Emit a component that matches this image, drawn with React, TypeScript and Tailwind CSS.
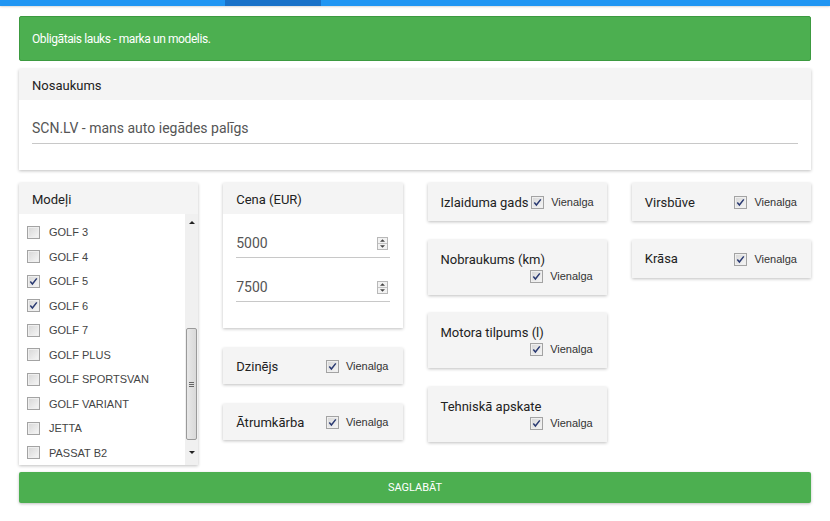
import React from "react";

const roboto = { fontFamily: "Roboto, 'Liberation Sans', sans-serif" };

function Cb({ checked }: { checked?: boolean }) {
  return (
    <span className="relative inline-flex h-[13px] w-[13px] shrink-0 items-center justify-center border border-[#a3a3a3] bg-linear-to-br from-[#d6d6d6] to-[#f7f7f7]">
      <span className="absolute inset-0 border border-[#efefef]" />
      {checked && (
        <svg viewBox="0 0 11 11" className="relative h-[11px] w-[11px]">
          <polyline points="2.3,5.6 4.4,8 8.8,2.4" fill="none" stroke="#2a3a72" strokeWidth="1.5" />
        </svg>
      )}
    </span>
  );
}

function Any() {
  return (
    <div className="flex items-center gap-[7px] whitespace-nowrap" style={{ fontFamily: "'Liberation Sans', Arial, sans-serif" }}>
      <Cb checked />
      <span className="text-[11px] text-[#333]">Vienalga</span>
    </div>
  );
}

function InlineCard({ label, h = "h-[38px]" }: { label: string; h?: string }) {
  return (
    <div className={`flex ${h} items-center justify-between whitespace-nowrap bg-[#f4f4f4] pl-[13px] pr-[14px] pt-[1px] shadow-[0_1px_3px_rgba(0,0,0,0.25)]`}>
      <span className="text-[13px] text-[#222]">{label}</span>
      <Any />
    </div>
  );
}

function StackCard({ label }: { label: string }) {
  return (
    <div className="flex h-[55px] flex-col bg-[#f4f4f4] pl-[13px] pr-[14px] pt-[12px] shadow-[0_1px_3px_rgba(0,0,0,0.25)]">
      <span className="text-[13px] leading-[16px] text-[#222]">{label}</span>
      <div className="flex h-[17px] justify-end">
        <Any />
      </div>
    </div>
  );
}

function Spinner() {
  return (
    <span className="flex h-[13px] w-[11px] flex-col border border-[#b8b8b8] bg-[#f2f2f2]">
      <span className="flex flex-1 items-center justify-center border-b border-[#c4c4c4]">
        <svg viewBox="0 0 6 3" className="h-[3px] w-[5px]"><polygon points="0,3 3,0 6,3" fill="#444" /></svg>
      </span>
      <span className="flex flex-1 items-center justify-center">
        <svg viewBox="0 0 6 3" className="h-[3px] w-[5px]"><polygon points="0,0 6,0 3,3" fill="#444" /></svg>
      </span>
    </span>
  );
}

const models = [
  { n: "GOLF 3" },
  { n: "GOLF 4" },
  { n: "GOLF 5", c: true },
  { n: "GOLF 6", c: true },
  { n: "GOLF 7" },
  { n: "GOLF PLUS" },
  { n: "GOLF SPORTSVAN" },
  { n: "GOLF VARIANT" },
  { n: "JETTA" },
  { n: "PASSAT B2" },
];

export default function App() {
  return (
    <div className="min-h-[521px] w-[830px] bg-white" style={roboto}>
      <div className="flex h-[6px] bg-[#2196f3] shadow-[0_1px_2px_rgba(0,0,0,0.15)]">
        <div className="ml-[225px] w-[96px] bg-[#1a72c9]" />
      </div>
      <div className="px-[19px] pt-[10px]">
        <div className="flex h-[45px] items-center rounded-[2px] border border-[#3c9a40] bg-[#4caf50] pl-[12px] text-[12px] tracking-[-0.4px] text-white">
          Obligātais lauks - marka un modelis.
        </div>

        <div className="mt-[8px] bg-white shadow-[0_1px_3px_rgba(0,0,0,0.25)]">
          <div className="flex h-[31px] items-center bg-[#f4f4f4] px-[13px] pt-[2px] text-[13px] text-[#222]">Nosaukums</div>
          <div className="px-[13px] pb-[26px] pt-[13px]">
            <div className="flex h-[31px] items-center border-b border-[#c8c8c8] pt-[1px] text-[14px] text-[#555]">
              SCN.LV - mans auto iegādes palīgs
            </div>
          </div>
        </div>

        <div className="mt-[13px] grid grid-cols-4 gap-x-[25px]">
          {/* Modeli */}
          <div className="flex h-[282px] flex-col bg-white shadow-[0_1px_3px_rgba(0,0,0,0.25)]">
            <div className="flex h-[31px] shrink-0 items-center bg-[#f4f4f4] px-[13px] pt-[2px] text-[13px] text-[#222]">Modeļi</div>
            <div className="flex min-h-0 flex-1">
              <div className="flex-1 pt-[6px]" style={{ fontFamily: "'Liberation Sans', Arial, sans-serif" }}>
                {models.map((m) => (
                  <div key={m.n} className="flex h-[24.5px] items-center pl-[8px]">
                    <Cb checked={m.c} />
                    <span className="ml-[9px] text-[11px] text-[#444]">{m.n}</span>
                  </div>
                ))}
              </div>
              <div className="flex w-[13px] flex-col items-center bg-[#f0f0f0]">
                <div className="flex h-[16px] items-center justify-center">
                  <svg viewBox="0 0 6 3" className="h-[3px] w-[6px]"><polygon points="0,3 3,0 6,3" fill="#222" /></svg>
                </div>
                <div className="h-[98px]" />
                <div className="flex h-[112px] w-[11px] items-center justify-center rounded-[2px] border border-[#9a9a9a] bg-linear-to-r from-[#e8e8e8] to-[#d9d9d9]">
                  <div className="flex flex-col gap-[1px]">
                    <span className="block h-[1px] w-[5px] bg-[#666]" />
                    <span className="block h-[1px] w-[5px] bg-[#666]" />
                    <span className="block h-[1px] w-[5px] bg-[#666]" />
                  </div>
                </div>
                <div className="flex flex-1 items-center justify-center">
                  <svg viewBox="0 0 6 3" className="h-[3px] w-[6px]"><polygon points="0,0 6,0 3,3" fill="#222" /></svg>
                </div>
              </div>
            </div>
          </div>

          {/* col 2 */}
          <div className="flex flex-col gap-[19.5px]">
            <div className="h-[145px] bg-white shadow-[0_1px_3px_rgba(0,0,0,0.25)]">
              <div className="flex h-[31px] items-center bg-[#f4f4f4] px-[13px] pt-[2px] text-[13px] text-[#222]">Cena (EUR)</div>
              <div className="flex flex-col gap-[14px] px-[13px] pt-[14px]">
                {["5000", "7500"].map((v) => (
                  <div key={v} className="flex h-[30px] items-center justify-between border-b border-[#c8c8c8] pr-[2px] pt-[2px] text-[14px] text-[#555]">
                    <span>{v}</span>
                    <Spinner />
                  </div>
                ))}
              </div>
            </div>
            <InlineCard label="Dzinējs" h="h-[36.5px]" />
            <InlineCard label="Ātrumkārba" h="h-[36.5px]" />
          </div>

          {/* col 3 */}
          <div className="flex flex-col gap-[18.5px]">
            <div className="flex h-[38px] items-center whitespace-nowrap bg-[#f4f4f4] pl-[13px] pr-[13px] pt-[1px] shadow-[0_1px_3px_rgba(0,0,0,0.25)]">
              <span className="text-[13px] text-[#222]">Izlaiduma gads</span>
              <div className="ml-auto pl-[2px]"><Any /></div>
            </div>
            <StackCard label="Nobraukums (km)" />
            <StackCard label="Motora tilpums (l)" />
            <StackCard label="Tehniskā apskate" />
          </div>

          {/* col 4 */}
          <div className="flex flex-col gap-[18.5px]">
            <InlineCard label="Virsbūve" />
            <InlineCard label="Krāsa" />
          </div>
        </div>

        <button className="mt-[7px] flex h-[31px] w-full items-center justify-center rounded-[2px] bg-[#4caf50] pt-[2px] text-[11px] text-white shadow-[0_1px_3px_rgba(0,0,0,0.25)]">
          SAGLABĀT
        </button>
      </div>
    </div>
  );
}
